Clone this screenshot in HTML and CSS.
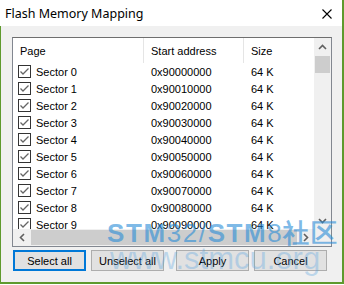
FILE: index.html
```html
<!DOCTYPE html>
<html lang="en">

<head>
    <meta charset="UTF-8">
    <title>Flash Memory Mapping</title>
    <link rel="stylesheet" href="styles.css">
</head>

<body>
    <div class="dialog">
        <div class="titlebar">
            <span class="title">Flash Memory Mapping</span>
            <svg class="close" width="10" height="10" viewBox="0 0 10 10">
                <path d="M0.5 0.5 L9.5 9.5 M9.5 0.5 L0.5 9.5" stroke="#000" stroke-width="1.1" fill="none" />
            </svg>
        </div>

        <div class="content">
            <div class="listbox">
                <div class="list-main">
                    <div class="list-view">
                        <div class="list-header">
                            <div class="hcell">Page</div>
                            <div class="hcell">Start address</div>
                            <div class="hcell last">Size</div>
                        </div>
                        <div class="list-rows" id="rows"></div>
                    </div>
                    <div class="vscroll">
                        <div class="sbtn">
                            <svg width="9" height="6" viewBox="0 0 9 6"><path d="M1 5 L4.5 1.5 L8 5" stroke="#606060" stroke-width="1.6" fill="none" /></svg>
                        </div>
                        <div class="vtrack"><div class="vthumb"></div></div>
                        <div class="sbtn">
                            <svg width="9" height="6" viewBox="0 0 9 6"><path d="M1 1 L4.5 4.5 L8 1" stroke="#606060" stroke-width="1.6" fill="none" /></svg>
                        </div>
                    </div>
                </div>
                <div class="hscroll-row">
                    <div class="hscroll">
                        <div class="sbtn">
                            <svg width="6" height="9" viewBox="0 0 6 9"><path d="M5 1 L1.5 4.5 L5 8" stroke="#606060" stroke-width="1.6" fill="none" /></svg>
                        </div>
                        <div class="htrack"><div class="hthumb"></div></div>
                        <div class="sbtn">
                            <svg width="6" height="9" viewBox="0 0 6 9"><path d="M1 1 L4.5 4.5 L1 8" stroke="#606060" stroke-width="1.6" fill="none" /></svg>
                        </div>
                    </div>
                    <div class="corner"></div>
                </div>
            </div>

            <div class="buttons">
                <button class="btn default">Select all</button>
                <button class="btn">Unselect all</button>
                <button class="btn apply">Apply</button>
                <button class="btn">Cancel</button>
            </div>
        </div>

        <div class="watermark">
            <div class="wm-top"><b>STM</b>32/<b>STM</b>8<b>社区</b></div>
            <div class="wm-bottom">www.stmcu.org</div>
        </div>
    </div>

    <script>
        let rows = document.getElementById("rows");
        for (let i = 0; i < 10; i++) {
            let addr = "0x900" + i.toString(16).toUpperCase() + "0000";
            let row = document.createElement("div");
            row.className = "row";
            row.innerHTML =
                '<div class="cell first">' +
                '<svg class="check" width="13" height="13" viewBox="0 0 13 13">' +
                '<rect x="0.5" y="0.5" width="12" height="12" fill="#fff" stroke="#333" />' +
                '<path d="M2.5 6.5 L5 9 L10.5 3.5" stroke="#666" stroke-width="1.3" fill="none" />' +
                '</svg>Sector ' + i + '</div>' +
                '<div class="cell">' + addr + '</div>' +
                '<div class="cell">64 K</div>';
            rows.appendChild(row);
        }
    </script>
</body>

</html>
```

FILE: styles.css
```css
body {
    margin: 0;
    background: #fff;
    font-family: "Liberation Sans", Arial, sans-serif;
    font-size: 11px;
    color: #000;
}

.dialog {
    position: relative;
    width: 344px;
    height: 284px;
    box-sizing: border-box;
    border-right: 2px solid #5f9a2e;
    display: flex;
    flex-direction: column;
    overflow: hidden;
}

.titlebar {
    height: 26px;
    flex: none;
    background: #fff;
    display: flex;
    align-items: center;
    justify-content: space-between;
    padding: 0 10px 0 5px;
}

.title {
    font-family: "Noto Sans", sans-serif;
    font-size: 12.5px;
    color: #000;
}

.close {
    margin-top: 2px;
}

.content {
    flex: 1;
    background: #f0f0f0;
    border-left: 1px solid #5f9a2e;
    border-bottom: 2px solid #5f9a2e;
    padding: 11px 10px 0 11px;
}

.listbox {
    width: 320px;
    height: 210px;
    box-sizing: border-box;
    border: 1px solid #828790;
    border-top-color: #6e6e6e;
    background: #fff;
    display: flex;
    flex-direction: column;
}

.list-main {
    display: flex;
    height: 191px;
}

.list-view {
    flex: 1;
    overflow: hidden;
}

.list-header,
.row {
    display: grid;
    grid-template-columns: 131px 100px 1fr;
}

.list-header {
    height: 25px;
}

.hcell {
    display: flex;
    align-items: center;
    padding-left: 7px;
    border-right: 1px solid #e5e5e5;
}

.hcell.last {
    border-right: none;
}

.row {
    height: 17px;
}

.cell {
    display: flex;
    align-items: center;
    padding-left: 7px;
    white-space: nowrap;
}

.cell.first {
    padding-left: 5px;
}

.check {
    margin-right: 5px;
    flex: none;
}

.vscroll {
    width: 17px;
    background: #f0f0f0;
    display: flex;
    flex-direction: column;
}

.sbtn {
    width: 17px;
    height: 17px;
    flex: none;
    display: flex;
    align-items: center;
    justify-content: center;
}

.vtrack {
    flex: 1;
    padding: 1px 1px 0 1px;
}

.vthumb {
    height: 17px;
    background: #cdcdcd;
}

.hscroll-row {
    display: flex;
    height: 17px;
}

.hscroll {
    flex: 1;
    display: flex;
    background: #f0f0f0;
}

.htrack {
    flex: 1;
    padding: 1px 0 1px 1px;
    display: flex;
}

.hthumb {
    flex: 1;
    background: #cdcdcd;
}

.corner {
    width: 17px;
    background: #f0f0f0;
}

.buttons {
    display: flex;
    margin: 3px 0 0 1px;
}

.btn {
    width: 74px;
    height: 21px;
    box-sizing: border-box;
    margin: 0 5px 0 0;
    padding: 0;
    background: #e1e1e1;
    border: 1px solid #adadad;
    font-family: "Liberation Sans", Arial, sans-serif;
    font-size: 11px;
    color: #000;
}

.btn.default {
    border: 2px solid #0078d7;
}

.btn.apply {
    margin-left: 7px;
}

.watermark {
    position: absolute;
    left: 107px;
    top: 220px;
    pointer-events: none;
    font-family: "Liberation Sans", Arial, sans-serif;
}

.wm-top {
    font-size: 26px;
    line-height: 26px;
    letter-spacing: 1.6px;
    color: rgba(40, 140, 215, 0.6);
}

.wm-top b {
    font-weight: bold;
}

.wm-bottom {
    margin: -4px 0 0 3px;
    font-size: 31px;
    line-height: 34px;
    color: rgba(90, 165, 225, 0.35);
}
```
